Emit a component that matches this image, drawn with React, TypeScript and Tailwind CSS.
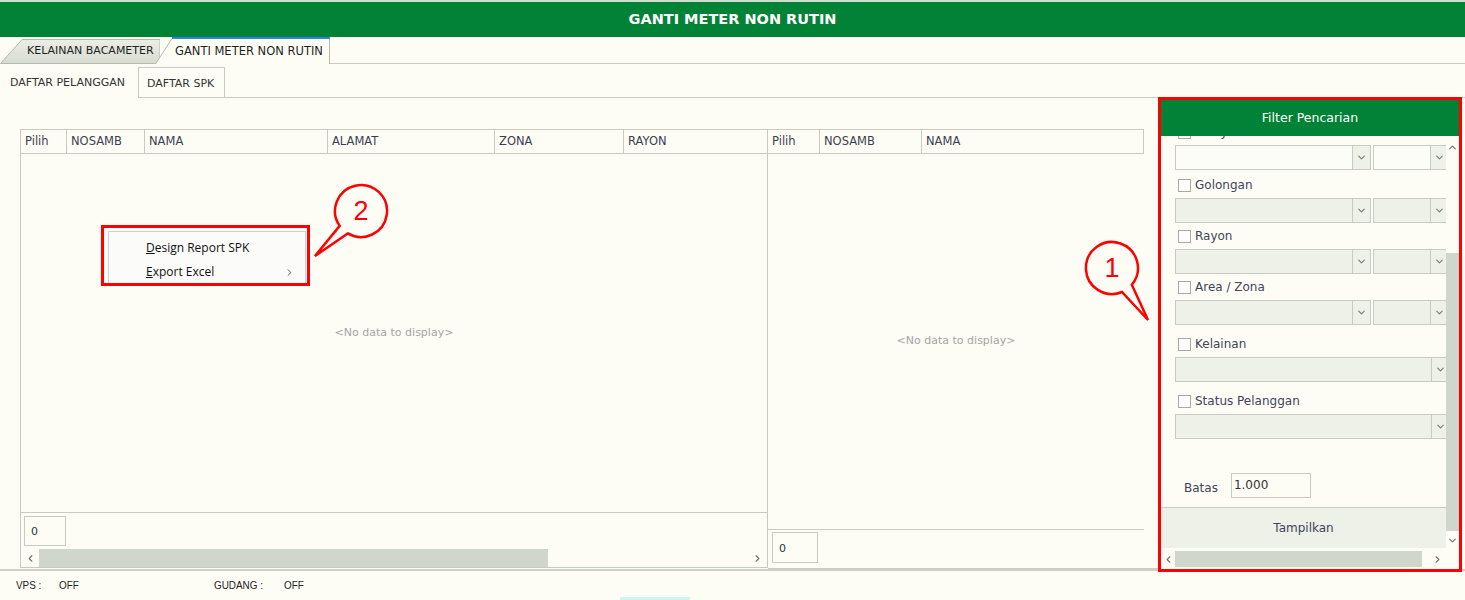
import React from "react";
import {
  ChevronDown,
  ChevronLeft,
  ChevronRight,
  ChevronUp,
} from "lucide-react";

const line = "border-[#c8ccc0]";

const Arrow = ({ dir }: { dir: "up" | "down" | "left" | "right" }) => {
  const props = { size: 11, strokeWidth: 2.5, className: "text-[#707070]" };
  if (dir === "up") return <ChevronUp {...props} />;
  if (dir === "down") return <ChevronDown {...props} />;
  if (dir === "left") return <ChevronLeft {...props} />;
  return <ChevronRight {...props} />;
};

const Select = ({
  width,
  disabled = true,
}: {
  width: string;
  disabled?: boolean;
}) => (
  <div
    className={`${width} flex-none h-[25px] flex border ${line} ${
      disabled ? "bg-[#edf1e7]" : "bg-[#fdfdf7]"
    }`}
  >
    <div className="flex-1" />
    <div
      className={`w-[18px] flex items-center justify-center border-l ${line} bg-[#edf1e7]`}
    >
      <ChevronDown size={11} strokeWidth={2.5} className="text-[#7a7a7a]" />
    </div>
  </div>
);

const CheckRow = ({ label, mt }: { label: string; mt: string }) => (
  <div className={`${mt} h-[20px] flex items-center pl-[3px]`}>
    <div className="w-[13px] h-[13px] border border-[#a9a9a9] bg-white" />
    <span className="ml-[4px] text-[12px] text-[#43435a]">{label}</span>
  </div>
);

const PairSelect = ({ first = false }: { first?: boolean }) => (
  <div className="mt-[3px] flex gap-[2px]">
    <Select width="w-[196px]" disabled={!first} />
    <Select width="w-[76px]" disabled={!first} />
  </div>
);

const HeaderCell = ({ w, label }: { w: string; label: string }) => (
  <div className={`${w} flex-none h-full flex items-center pl-[4px] pt-px border-r ${line}`}>
    {label}
  </div>
);

const Bubble = ({
  d,
  x,
  y,
  n,
}: {
  d: string;
  x: number;
  y: number;
  n: string;
}) => (
  <>
    <path d={d} fill="#fdfdf6" stroke="#ff0000" strokeWidth={2.5} strokeLinejoin="miter" />
    <text
      x={x}
      y={y}
      textAnchor="middle"
      dominantBaseline="central"
      fill="#ff0000"
      fontSize="27"
      fontFamily="Liberation Sans, sans-serif"
    >
      {n}
    </text>
  </>
);

export default function App() {
  return (
    <div className="relative w-[1465px] h-[600px] overflow-hidden flex flex-col bg-[#fdfdf6] font-['DejaVu_Sans',sans-serif] text-[11.5px] text-[#3d3d52]">
      {/* title */}
      <div className="h-[2px] bg-[#cfdccf]" />
      <div className="h-[35px] flex-none bg-[#028236] flex items-center justify-center text-white font-bold text-[14.5px]">
        GANTI METER NON RUTIN
      </div>

      {/* top tabs */}
      <div className="h-[27px] flex-none flex">
        <div className="relative w-[160px] h-full flex items-center pl-[27px] pt-[2px] text-[#1f1f1f] text-[11px]">
          <svg className="absolute inset-0" width="160" height="27">
            <defs>
              <linearGradient id="tg" x1="0" y1="0" x2="0" y2="1">
                <stop offset="0" stopColor="#eceee6" />
                <stop offset="1" stopColor="#d8dbd1" />
              </linearGradient>
            </defs>
            <path d="M0.5 26.5 L22 2.5 L160 2.5 L160 26.5 Z" fill="url(#tg)" stroke="#b5b9ae" />
          </svg>
          <span className="relative">KELAINAN BACAMETER</span>
        </div>
        <div className="relative -ml-[5px] w-[175px] h-full flex items-center pl-[20px] pt-[2px] text-[#1f1f1f] text-[11.5px]">
          <svg className="absolute inset-0" width="175" height="27">
            <path d="M0.5 27 L17 1.5 L174.5 1.5 L174.5 27" fill="#fdfdf6" stroke="#b5b9ae" />
            <line x1="17" y1="1" x2="175" y2="1" stroke="#2a84e8" strokeWidth="2" />
          </svg>
          <span className="relative">GANTI METER NON RUTIN</span>
        </div>
        <div className={`flex-1 border-b ${line}`} />
      </div>

      {/* sub tabs */}
      <div className="h-[34px] flex-none flex items-end">
        <div className="w-[138px] h-[32px] flex items-center pl-[10px] pt-[3px] text-[11px] text-[#333]">
          DAFTAR PELANGGAN
        </div>
        <div className={`w-[87px] h-[31px] flex items-center pl-[8px] pt-[3px] border ${line} text-[11px] text-[#333]`}>
          DAFTAR SPK
        </div>
        <div className={`flex-1 h-full border-b ${line}`} />
      </div>

      {/* main */}
      <div className="flex-1 flex min-h-0">
        <div className="w-[1158px] flex-none pl-[20px] pt-[31px] flex">
          {/* left grid */}
          <div className={`w-[748px] h-[439px] flex flex-col border ${line}`}>
            <div className={`h-[24px] flex border-b ${line}`}>
              <HeaderCell w="w-[46px]" label="Pilih" />
              <HeaderCell w="w-[78px]" label="NOSAMB" />
              <HeaderCell w="w-[183px]" label="NAMA" />
              <HeaderCell w="w-[167px]" label="ALAMAT" />
              <HeaderCell w="w-[129px]" label="ZONA" />
              <div className="flex-1 flex items-center pl-[4px] pt-px">RAYON</div>
            </div>
            <div className="flex-1 flex items-center justify-center text-[11px] text-[#a5a5a5]">
              &lt;No data to display&gt;
            </div>
            <div className={`h-[37px] border-t ${line} pl-[3px] pt-[3px]`}>
              <div className={`w-[42px] h-[30px] border ${line} pl-[6px] pt-[7px] text-[11px] text-[#333]`}>0</div>
            </div>
            <div className="h-[18px] flex items-stretch">
              <div className="w-[18px] flex items-center justify-center">
                <Arrow dir="left" />
              </div>
              <div className="w-[509px] bg-[#d1d6ca]" />
              <div className="flex-1" />
              <div className="w-[19px] flex items-center justify-center">
                <Arrow dir="right" />
              </div>
            </div>
          </div>

          {/* right grid */}
          <div className={`w-[390px] h-[440px] flex flex-col border-b ${line}`}>
            <div className={`w-[376px] h-[25px] flex border-t border-b border-r ${line}`}>
              <HeaderCell w="w-[52px]" label="Pilih" />
              <HeaderCell w="w-[102px]" label="NOSAMB" />
              <div className="flex-1 flex items-center pl-[4px] pt-px">NAMA</div>
            </div>
            <div className="flex-1 flex items-center justify-center text-[11px] text-[#a5a5a5] w-[376px]">
              &lt;No data to display&gt;
            </div>
            <div className={`w-[376px] h-[39px] border-t ${line} pl-[4px] pt-[2px]`}>
              <div className={`w-[46px] h-[31px] border ${line} pl-[6px] pt-[8px] text-[11px] text-[#333]`}>0</div>
            </div>
          </div>
        </div>

        {/* filter panel */}
        <div className="w-[304px] h-[475px] -mt-px flex-none relative z-10 border-[3px] border-[#ff0000] flex flex-col bg-[#fdfdf6]">
          <div className="h-[36px] flex-none bg-[#028236] flex items-center justify-center text-white text-[12.5px]">
            Filter Pencarian
          </div>
          <div className="h-[413px] flex-none flex">
            <div className="w-[285px] overflow-hidden flex flex-col">
              <div className="-mt-[14px] pl-[14px] flex flex-col">
                <CheckRow label="Wilayah" mt="mt-0" />
                <PairSelect first />
                <CheckRow label="Golongan" mt="mt-[5px]" />
                <PairSelect />
                <CheckRow label="Rayon" mt="mt-[3px]" />
                <PairSelect />
                <CheckRow label="Area / Zona" mt="mt-[3px]" />
                <PairSelect />
                <CheckRow label="Kelainan" mt="mt-[9px]" />
                <div className="mt-[3px] flex">
                  <Select width="w-[275px]" />
                </div>
                <CheckRow label="Status Pelanggan" mt="mt-[9px]" />
                <div className="mt-[3px] flex">
                  <Select width="w-[275px]" />
                </div>
                <div className="mt-[34px] h-[25px] flex items-center pl-[9px]">
                  <span className="mt-[5px] text-[12px] text-[#43435a]">Batas</span>
                  <div className={`ml-[13px] w-[80px] h-[25px] border ${line} pl-[2px] pt-[2px] text-[12px] text-[#333]`}>
                    1.000
                  </div>
                </div>
              </div>
              <div className={`mt-[9px] h-[41px] flex-none border-t ${line} bg-[#edf1e7] flex items-center justify-center text-[12px] text-[#43435a]`}>
                Tampilkan
              </div>
            </div>
            <div className="w-[13px] flex flex-col">
              <div className="h-[20px] flex items-center justify-center pt-[2px]">
                <Arrow dir="up" />
              </div>
              <div className="h-[97px]" />
              <div className="h-[278px] bg-[#d1d6ca]" />
              <div className="h-[18px] flex items-center justify-center">
                <Arrow dir="down" />
              </div>
            </div>
          </div>
          <div className="h-[20px] flex-none flex">
            <div className="w-[14px] flex items-center justify-center">
              <Arrow dir="left" />
            </div>
            <div className="w-[247px] my-[2px] bg-[#d1d6ca]" />
            <div className="w-[7px]" />
            <div className="w-[17px] flex items-center justify-center">
              <Arrow dir="right" />
            </div>
            <div className="flex-1" />
          </div>
        </div>
      </div>

      {/* status bar */}
      <div className="h-[31px] flex-none flex flex-col border-t-2 border-[#cdd1c6] font-['Liberation_Sans',sans-serif] text-[11px] text-[#222]">
        <div className="flex-1 flex items-center pl-[16px] pt-[2px]">
          <span className="w-[43px] scale-x-90 origin-left">VPS :</span>
          <span className="w-[155px] scale-x-90 origin-left">OFF</span>
          <span className="w-[70px] scale-x-90 origin-left">GUDANG :</span>
          <span className="scale-x-90 origin-left">OFF</span>
        </div>
        <div className="h-[3px] ml-[620px] w-[70px] bg-[#cdf6f0]" />
      </div>

      {/* context menu */}
      <div className="absolute left-[108px] top-[231px] w-[198px] h-[53px] border border-[#cfcfcf] bg-[#fbfbf9] pt-[4px] font-['Open_Sans',sans-serif] text-[12px] text-[#111]">
        <div className="h-[24px] flex items-center pl-[37px]">
          <span>
            <span className="underline">D</span>esign Report SPK
          </span>
        </div>
        <div className="h-[24px] flex items-center pl-[37px] pr-[10px]">
          <span className="flex-1">
            <span className="underline">E</span>xport Excel
          </span>
          <ChevronRight size={11} strokeWidth={2} className="text-[#555]" />
        </div>
      </div>
      <div className="absolute left-[101px] top-[225px] w-[209px] h-[61px] border-[3px] border-[#ff0000]" />

      {/* callouts */}
      <svg className="absolute inset-0 pointer-events-none" width="1465" height="600">
        <Bubble
          d="M347.8 233.4 A26 26 0 1 0 339.7 225.9 L315 256 Z"
          x={361}
          y={211}
          n="2"
        />
        <Bubble
          d="M1122 292 A26 26 0 1 1 1131.8 284.8 L1148 320 Z"
          x={1112}
          y={268}
          n="1"
        />
      </svg>
    </div>
  );
}
